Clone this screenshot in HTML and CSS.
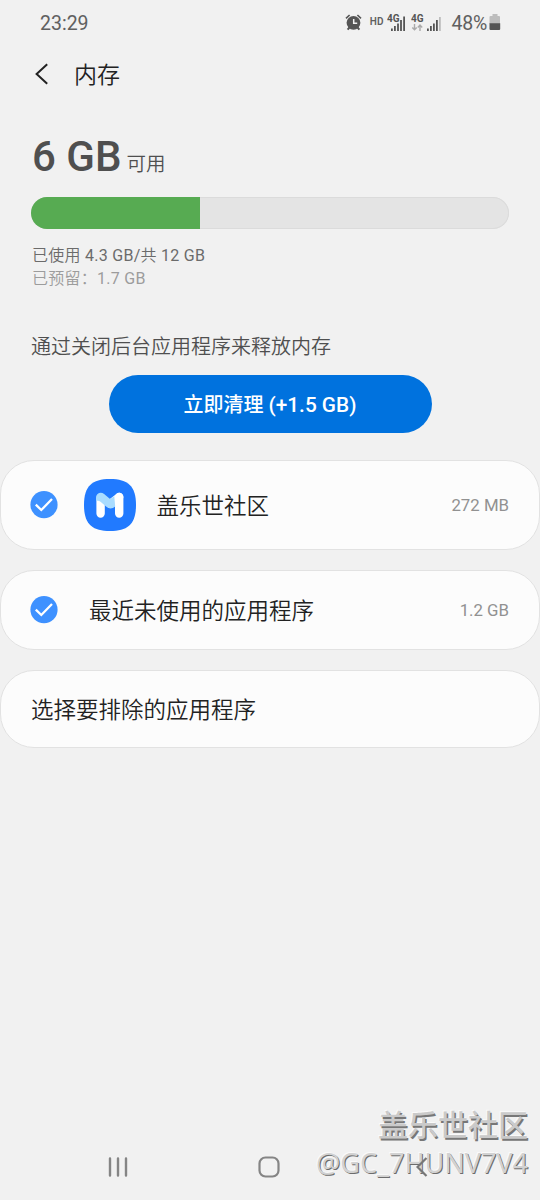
FILE: index.html
```html
<!DOCTYPE html>
<html lang="zh-CN">
<head>
<meta charset="utf-8">
<title>内存</title>
<link rel="stylesheet" href="styles.css">
</head>
<body>
<div class="screen">
  <div class="status">
    <span class="time">23:29</span>
    <div class="status-icons">
      <svg class="alarm" width="17" height="17" viewBox="0 0 17 17" fill="none" stroke="#555">
        <circle cx="8.5" cy="8.8" r="6.9" fill="#555" stroke="none"/>
        <path d="M1 4.4 4.6 1M16 4.4 12.4 1" stroke-width="1.6"/>
        <path d="M4.5 13.5 2.6 15.6M12.5 13.5l1.9 2.1" stroke-width="2"/>
        <path d="M8.7 5v4.3h3.5" stroke="#f1f1f1" stroke-width="1.5"/>
      </svg>
      <span class="hd">HD</span>
      <svg class="signal" width="19" height="18" viewBox="0 0 19 18">
        <text x="0" y="8" class="net">4G</text>
        <path d="M4 14.5h1.8V17H4zM7 12h1.8v5H7zM10.1 9.5h1.8V17h-1.8zM13.1 6h1.8v11h-1.8zM16.2 2.5H18V17h-1.8z" fill="#555"/>
      </svg>
      <svg class="signal-two" width="31" height="18" viewBox="0 0 31 18">
        <text x="0" y="8" class="net">4G</text>
        <path d="M3.5 10v5.5M1.3 13.4l2.2 2.3 2.2-2.3M9 17v-5.5M6.8 13.4 9 11.1l2.2 2.3" fill="none" stroke="#aaa" stroke-width="1.4"/>
        <path d="M16 14.5h1.8V17H16zM19 12h1.8v5H19zM22 9.5h1.8V17H22zM25 6h1.8v11H25z" fill="#555"/>
        <path d="M28 3h1.8v14H28z" fill="#bdbdbd"/>
      </svg>
      <span class="percent">48%</span>
      <svg class="battery" width="12" height="17" viewBox="0 0 12 17">
        <path d="M3.5 0h5v2H10q1 0 1 1v7H.5V3q0-1 1-1h2z" fill="#bdbdbd"/>
        <path d="M.5 9.3H11.2V15q0 1-1 1H1.5q-1 0-1-1z" fill="#555"/>
      </svg>
    </div>
  </div>

  <header class="header">
    <svg width="14" height="22" viewBox="0 0 14 22" fill="none" stroke="#222" stroke-width="2"><path d="M12.2 1.3 1.6 11l10.6 9.7"/></svg>
    <h1 class="title">内存</h1>
  </header>

  <section class="summary">
    <div class="free"><span class="amount">6 GB</span><span class="free-label">可用</span></div>
    <div class="bar"><div class="bar-used" style="width:35.4%"></div></div>
    <div class="used">已使用 4.3 GB/共 12 GB</div>
    <div class="reserved">已预留：1.7 GB</div>
    <p class="hint">通过关闭后台应用程序来释放内存</p>
    <button class="clean">立即清理 <span class="gain">(+1.5 GB)</span></button>
  </section>

  <main class="cards">
    <div class="card card-app">
      <svg class="check" width="28" height="28" viewBox="0 0 28 28"><circle cx="14" cy="13.7" r="13.6" fill="#3e91ff"/><path d="M5.8 13.7 11.3 19 22 8" fill="none" stroke="#fff" stroke-width="2.3"/></svg>
      <svg class="app-icon" width="52" height="52" viewBox="0 0 52 52">
        <path d="M26 0C44 0 52 7 52 26S44 52 26 52 0 45 0 26 8 0 26 0z" fill="#217aff"/>
        <path d="M16.6 19v15.6M35.2 18v16.6" stroke="#fff" stroke-width="8.4" stroke-linecap="round"/>
        <path d="M35.2 18 26.2 25" stroke="#fff" stroke-width="8.4" stroke-linecap="round"/>
        <path d="M12.2 22V18c0-4 4.8-5.6 7.9-3.1l6 5 4.2-2.6 .9 10.1c-3 2.6-6.7 2.3-9.4-.1l-5.3-4.6c-1.3-1.1-2.7-1.3-4.3-.7z" fill="#a9dcff"/>
      </svg>
      <span class="name app-name">盖乐世社区</span>
      <span class="size">272 MB</span>
    </div>
    <div class="card card-unused">
      <svg class="check" width="28" height="28" viewBox="0 0 28 28"><circle cx="14" cy="13.7" r="13.6" fill="#3e91ff"/><path d="M5.8 13.7 11.3 19 22 8" fill="none" stroke="#fff" stroke-width="2.3"/></svg>
      <span class="name unused-name">最近未使用的应用程序</span>
      <span class="size">1.2 GB</span>
    </div>
    <div class="card card-exclude"><span class="name">选择要排除的应用程序</span></div>
  </main>

  <nav class="nav">
    <svg width="20" height="20" viewBox="0 0 20 20" stroke="#858585" stroke-width="2.4" stroke-linecap="round"><path d="M2 1.5v17M10 1.5v17M18 1.5v17"/></svg>
    <svg class="home" width="22" height="22" viewBox="0 0 22 22" fill="none" stroke="#858585" stroke-width="2.2"><rect x="1.5" y="1.5" width="19" height="19" rx="6"/></svg>
    <svg width="12" height="20" viewBox="0 0 12 20" fill="none" stroke="#777" stroke-width="2.2"><path d="M10.5 1 1.5 10l9 9"/></svg>
  </nav>
  <div class="watermark"><div class="mark-site">盖乐世社区</div><div class="mark-user">@GC_7HUNV7V4</div></div>
</div>
</body>
</html>
```
FILE: styles.css
```css
* { box-sizing: border-box; }
body {
  margin: 0;
  background: #f1f1f1;
  color: #222;
  font-family: Roboto, "Noto Sans CJK SC DemiLight", "Noto Sans CJK SC", sans-serif;
}
.screen {
  position: relative;
  height: 1200px;
  display: flex;
  flex-direction: column;
  overflow: hidden;
}
.status {
  height: 46px;
  padding: 0 39px 0 40px;
  display: flex;
  justify-content: space-between;
  align-items: center;
  color: #606060;
  font-size: 19.5px;
}
.status-icons { display: flex; align-items: center; }
.alarm { margin-bottom: 2px; }
.hd { margin: 0 3px 3px 8px; font-size: 10px; line-height: 12px; font-weight: 600; }
.net { font: bold 10px Roboto, sans-serif; fill: #555; }
.signal { margin-bottom: 1px; }
.signal-two { margin: 0 9px 1px 5px; }
.percent { letter-spacing: -0.2px; margin-right: 2px; }
.battery { margin-bottom: 1px; }
.alarm, .hd { position: relative; left: -1px; }
.header {
  height: 56px;
  padding: 0 35px;
  display: flex;
  align-items: center;
  gap: 25px;
}
.title { margin: 0; padding-top: 4px; font-size: 23px; line-height: 34px; font-weight: 400; }
.summary {
  height: 358px;
  padding: 30px 31px 0;
  display: flex;
  flex-direction: column;
  color: #4f4f4f;
}
.free { height: 52px; display: flex; align-items: baseline; line-height: 50px; }
.amount { font-size: 42px; font-weight: 500; margin-left: 1px; }
.free-label { font-size: 19.5px; margin-left: 5px; }
.bar {
  height: 32px;
  margin: 13px 0 15px;
  border-radius: 16px;
  background: #e4e4e4;
  box-shadow: inset 0 0 0 1px #dbdbdb;
  overflow: hidden;
}
.bar-used { height: 100%; background: #57ab52; }
.used, .reserved { font-size: 16px; line-height: 23px; padding-left: 1px; letter-spacing: 0.27px; }
.used { color: #6b6b6b; }
.reserved { color: #9c9c9c; }
.hint { margin: 42px 0 13px; font-size: 20px; line-height: 30px; white-space: nowrap; }
.clean {
  width: 323px;
  height: 58px;
  padding: 2px 0 0;
  align-self: center;
  border: 0;
  border-radius: 29px;
  background: #0072de;
  color: #fff;
  font: 500 20px/30px Roboto, "Noto Sans CJK SC", sans-serif;
}
.gain { font-size: 20.8px; }
.cards { display: flex; flex-direction: column; gap: 20px; }
.card {
  display: flex;
  align-items: center;
  padding: 0 30px;
  border: 1px solid #e2e2e2;
  border-radius: 34px;
  background: #fcfcfc;
}
.card-app { height: 90px; }
.card-unused { height: 80px; }
.card-exclude { height: 78px; }
.check { margin-left: -1px; }
.app-icon { margin: 0 21px 1px 25.5px; }
.name { padding-top: 2px; font-size: 22.5px; line-height: 34px; }
.unused-name { margin-left: 31px; }
.size { margin-left: auto; font-size: 16.8px; color: #919191; }
.nav {
  position: relative;
  z-index: 1;
  margin-top: auto;
  height: 66px;
  padding: 0 112px 0 108px;
  display: flex;
  justify-content: space-between;
  align-items: center;
}
.home { margin-right: 6px; }
.watermark {
  position: absolute;
  right: 12px;
  bottom: 18px;
  text-align: right;
  color: #cacaca;
  text-shadow: 1.5px 1.5px 0 #777, -1px -1px 0 #fafafa;
}
.mark-site { font: 500 30px/42px "Noto Sans CJK SC", sans-serif; }
.mark-user {
  font: 400 27px/38px "Noto Sans", sans-serif;
  color: #d2d2d2;
  text-shadow: 1px 1px 0 #6c6c6c, -1px -1px 0 #fafafa;
}
```
